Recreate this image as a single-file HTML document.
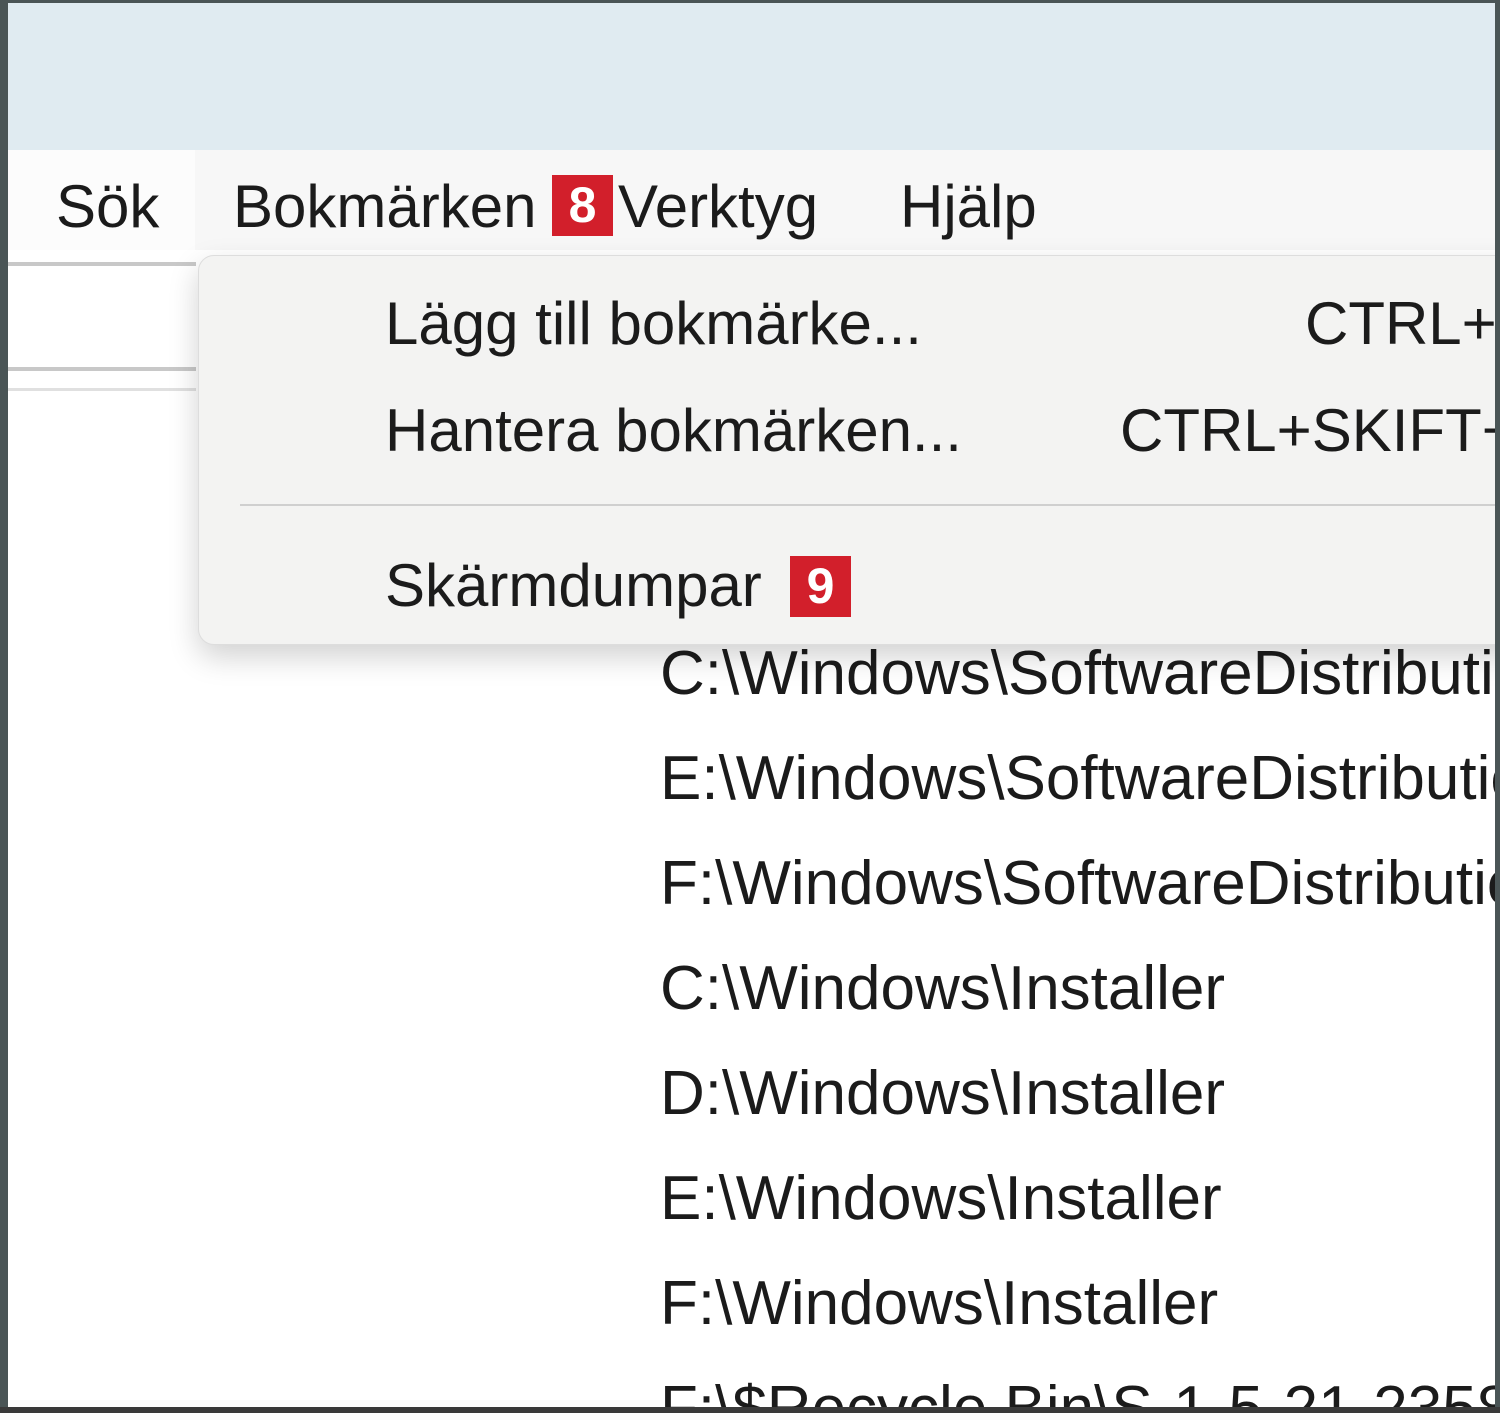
<!DOCTYPE html>
<html><head><meta charset="utf-8"><style>
*{margin:0;padding:0;box-sizing:border-box}
html,body{width:1500px;height:1413px;overflow:hidden}
body{background:#fff;font-family:"Liberation Sans",sans-serif;color:#1b1b1b}
#w{position:relative;width:1500px;height:1413px;overflow:hidden}
.t{position:absolute;font-size:60px;line-height:1;white-space:nowrap}
.l{font-size:62px}
.b{position:absolute;background:#d21f2b;color:#fff;font-weight:bold;font-size:50px;line-height:60px;text-align:center;width:61px;height:61px}
</style></head><body><div id="w">
<div style="position:absolute;left:0;top:0;width:1500px;height:150px;background:#e0ebf1"></div>
<div style="position:absolute;left:8px;top:150px;width:1490px;height:100px;background:#fcfcfc"></div>
<div style="position:absolute;left:195px;top:150px;width:1300px;height:100px;background:#f7f7f7"></div>
<div style="position:absolute;left:8px;top:262px;width:188px;height:4px;background:#c8c8c8"></div>
<div style="position:absolute;left:8px;top:367px;width:188px;height:4px;background:#c8c8c8"></div>
<div style="position:absolute;left:8px;top:388px;width:188px;height:3px;background:#e0e0e0"></div>
<div class="t" style="left:56px;top:177px">Sök</div>
<div class="t" style="left:233px;top:177px">Bokmärken</div>
<div class="b" style="left:552px;top:175px">8</div>
<div class="t" style="left:618px;top:177px">Verktyg</div>
<div class="t" style="left:900px;top:177px">Hjälp</div>
<div class="t l" style="left:660px;top:643px">C:\Windows\SoftwareDistribution</div>
<div class="t l" style="left:660px;top:748px">E:\Windows\SoftwareDistribution</div>
<div class="t l" style="left:660px;top:853px">F:\Windows\SoftwareDistribution</div>
<div class="t l" style="left:660px;top:958px">C:\Windows\Installer</div>
<div class="t l" style="left:660px;top:1063px">D:\Windows\Installer</div>
<div class="t l" style="left:660px;top:1168px">E:\Windows\Installer</div>
<div class="t l" style="left:660px;top:1273px">F:\Windows\Installer</div>
<div class="t l" style="left:660px;top:1378px">F:\$Recycle.Bin\S-1-5-21-2358</div>
<div style="position:absolute;left:198px;top:255px;width:1400px;height:390px;background:#f3f3f2;border:1px solid #ddd;border-radius:16px;box-shadow:0 12px 30px rgba(0,0,0,.18)"></div>
<div class="t" style="left:385px;top:294px">Lägg till bokmärke...</div>
<div class="t" style="left:1305px;top:294px">CTRL+D</div>
<div class="t" style="left:385px;top:401px">Hantera bokmärken...</div>
<div class="t" style="left:1120px;top:401px">CTRL+SKIFT+B</div>
<div style="position:absolute;left:240px;top:504px;width:1260px;height:2px;background:#cfcfcf"></div>
<div class="t" style="left:385px;top:556px">Skärmdumpar</div>
<div class="b" style="left:790px;top:556px">9</div>
<div style="position:absolute;left:0;top:0;width:8px;height:1413px;background:#4a5556"></div>
<div style="position:absolute;left:1495px;top:0;width:5px;height:1413px;background:#4a5556"></div>
<div style="position:absolute;left:0;top:0;width:1500px;height:3px;background:#4a5556"></div>
<div style="position:absolute;left:0;top:1407px;width:1500px;height:6px;background:#3a3a3a"></div>
</div></body></html>
